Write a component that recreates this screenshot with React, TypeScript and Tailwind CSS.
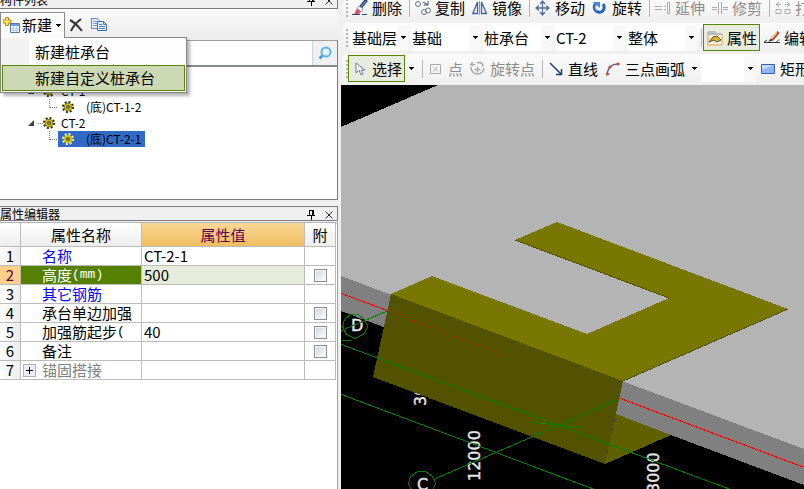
import { useState } from "react";
import type { ReactNode } from "react";
import clsx from "clsx";

const uiFont = "font-['Noto_Sans_CJK_SC','Noto_Sans_CJK_TC',sans-serif]";
const monoFont = "font-['Liberation_Mono','Noto_Sans_CJK_SC',monospace]";

const rows = [
  { name: "名称", value: "CT-2-1", tone: "text-[#0000f0]" },
  { name: "高度", unit: "(mm)", value: "500", check: true, selected: true },
  { name: "其它钢筋", value: "", tone: "text-[#0000f0]" },
  { name: "承台单边加强", value: "", check: true },
  { name: "加强筋起步", unit: "(", value: "40", check: true },
  { name: "备注", value: "", check: true },
  { name: "锚固搭接", value: "", tone: "text-[#808080]", expand: true },
];

function Caret({ className = "" }: { className?: string }) {
  return (
    <svg className={clsx("h-[3px] w-[5px] shrink-0", className)} viewBox="0 0 5 3" shapeRendering="crispEdges">
      <path d="M0 0h5v1H0zM1 1h3v1H1zM2 2h1v1H2z" fill="#000" />
    </svg>
  );
}

function PanelTitle({ title, className }: { title: string; className: string }) {
  return (
    <div className={clsx("flex shrink-0 items-center justify-between border-r border-b border-[#7c7c7c] bg-[#f0f0f0] pr-[2px] text-xs", className)}>
      <h2 className="leading-3">{title}</h2>
      <div className="flex gap-[6px]">
        <button type="button" aria-label="固定">
          <svg className="size-3" viewBox="0 0 12 12" shapeRendering="crispEdges">
            <path d="M4 7V2h3v5M7 2h1v5H7M2 7h8M6 8v4" fill="none" stroke="#000" />
          </svg>
        </button>
        <button type="button" aria-label="关闭">
          <svg className="size-3" viewBox="0 0 12 12">
            <path d="M2.5 3.5l7 7M9.5 3.5l-7 7" fill="none" stroke="#222" />
          </svg>
        </button>
      </div>
    </div>
  );
}

function GearIcon({ selected = false }: { selected?: boolean }) {
  return (
    <svg className="size-3 shrink-0" viewBox="0 0 12 12">
      <circle cx="6" cy="6" r="5" fill="none" stroke={selected ? "#fff6b0" : "#2a2600"} strokeWidth="2" strokeDasharray="1.960 1.960" />
      <circle cx="6" cy="6" r="3.800" fill="#f0e000" stroke={selected ? "#e8d800" : "#594f00"} strokeWidth=".7" />
      <path d="M6 2.500v7M2.500 6h7M3.500 3.500l5 5M8.500 3.500l-5 5" stroke="#7b7000" strokeWidth=".6" />
      <circle cx="6" cy="6" r="1.300" fill="#fff" stroke="#222" />
    </svg>
  );
}

function TreeRow({ label, child = false, selected = false }: { label: string; child?: boolean; selected?: boolean }) {
  return (
    <li className={clsx("flex h-4 items-center", child ? "pl-[49px]" : "pl-[28px]")}>
      {child ? (
        <svg className="h-4 w-[9px] shrink-0" viewBox="0 0 9 16" shapeRendering="crispEdges">
          <path d="M.5 0v9M.5 8.5H9" fill="none" stroke="#777" strokeDasharray="1 1" />
        </svg>
      ) : (
        <svg className="h-4 w-[15px] shrink-0" viewBox="0 0 15 16">
          <path d="M6 5v6H0z" fill="#404040" />
          <path d="M10 8.5h5" stroke="#777" strokeDasharray="1 1" />
        </svg>
      )}
      <button
        type="button"
        className={clsx("flex h-4 items-center", child ? "gap-3 pr-1 pl-1" : "gap-[6px]", selected && "bg-[#316ac5] text-black")}
      >
        <GearIcon selected={selected} />
        <span className="text-xs leading-4 whitespace-nowrap">{label}</span>
      </button>
    </li>
  );
}

function CreateMenu() {
  const [active, setActive] = useState(1);
  const items = ["新建桩承台", "新建自定义桩承台"];
  return (
    <div className="relative">
      <button type="button" className="relative z-20 flex h-[26px] w-[65px] items-center border border-b-0 border-[#8a8a8a] bg-[#fbfbfb] pl-[2px]">
        <svg className="h-4 w-[18px] shrink-0" viewBox="0 0 18 16">
          <path d="M2.500.5h3v2.500h2.500v3H5.500v2.500h-3V6H0V3h2.500z" fill="#ffe45a" stroke="#b28a16" />
          <path d="M7.500 6.500h9v9h-9z" fill="#f4f8ff" stroke="#5177ad" />
          <path d="M8 7h8v2H8z" fill="#6e9bdc" />
          <path d="M8 11.500h8M8 13.500h8M10.500 9v6M13.500 9v6" stroke="#a8c2e6" strokeWidth=".7" />
        </svg>
        <span className="ml-px">新建</span>
        <Caret className="ml-1" />
      </button>
      <ul role="menu" className="absolute top-[25px] left-0 z-10 w-[187px] border border-[#868686] bg-[linear-gradient(to_right,#f2f2f2_28px,#fdfdfd_28px)] p-px shadow-[3px_3px_3px_rgba(0,0,0,0.3)]">
        {items.map((item, i) => (
          <li key={item} role="none">
            <button
              type="button"
              role="menuitem"
              onMouseEnter={() => setActive(i)}
              className={clsx("flex h-[26px] w-full items-center border pl-8", active === i ? "border-[#5a8500] bg-[#ccd9b4]" : "border-transparent")}
            >
              {item}
            </button>
          </li>
        ))}
      </ul>
    </div>
  );
}

function ComponentPanel() {
  return (
    <section className="flex h-[200px] w-[338px] shrink-0 flex-col">
      <PanelTitle title="构件列表" className="h-[9px] overflow-hidden [&_h2]:-mt-2 [&_svg]:-mt-2" />
      <div className="flex h-[31px] shrink-0 items-center gap-1 bg-gradient-to-b from-[#fafafa] to-[#ececec]">
        <CreateMenu />
        <button type="button" aria-label="删除" className="mr-1">
          <svg className="h-4 w-[14px]" viewBox="0 0 14 16">
            <path d="M1 3c4 2 8 6 12 11M12 2C8 5 4 9 2 14" fill="none" stroke="#333" strokeWidth="2" />
          </svg>
        </button>
        <button type="button" aria-label="复制">
          <svg className="size-4" viewBox="0 0 16 16">
            <path d="M.5 1.500h6l2 2v8h-8z" fill="#e4eefb" stroke="#5e8bc9" />
            <path d="M2 4.500h4M2 6.500h4M2 8.500h4" stroke="#7ba2d8" />
            <path d="M6.500 4.500h6l3 3v6h-9z" fill="#e4eefb" stroke="#3e6fb5" />
            <path d="M12.500 4.500v3h3M8 7.500h3M8 9.500h6M8 11.500h6" fill="none" stroke="#4f7fc4" />
          </svg>
        </button>
      </div>
      <form className="flex h-[27px] shrink-0 border-t border-r border-b-2 border-t-[#a0a0a0] border-r-[#7c7c7c] border-b-[#868a90] bg-[#f0f0f0]" onSubmit={(e) => e.preventDefault()}>
        <input type="search" aria-label="搜索构件" className="min-w-0 flex-1 border-r border-[#c9d5e4] bg-white outline-none" />
        <button type="submit" aria-label="搜索" className="flex w-6 items-center justify-center">
          <svg className="size-[14px]" viewBox="0 0 14 14">
            <path d="M5 9L1.500 12.500" stroke="#3d9be0" strokeWidth="2.500" />
            <circle cx="8" cy="6" r="4.500" fill="#e5f5ff" stroke="#62b4ee" strokeWidth="2" />
          </svg>
        </button>
      </form>
      <div className="flex-1 border-r border-b border-[#7c7c7c] bg-white pt-4">
        <ul>
          <TreeRow label="CT-1" />
          <TreeRow label="(底)CT-1-2" child />
          <TreeRow label="CT-2" />
          <TreeRow label="(底)CT-2-1" child selected />
        </ul>
      </div>
    </section>
  );
}

function PropertyPanel() {
  const cell = "border-r border-b border-[#bcbcbc] p-0";
  const head = "bg-gradient-to-b from-white to-[#ededed]";
  return (
    <section className="mt-[6px] flex w-[338px] flex-1 flex-col">
      <PanelTitle title="属性编辑器" className="h-[15px] border-t" />
      <div className="mt-px flex-1 border-t border-r border-t-[#b0b4b8] border-r-[#a0a0a0] bg-white">
        <table className="w-[336px] table-fixed border-separate border-spacing-0 text-[15px] leading-[18px]">
          <colgroup>
            <col className="w-[21px]" />
            <col className="w-[121px]" />
            <col className="w-[163px]" />
            <col className="w-[31px]" />
          </colgroup>
          <thead>
            <tr className="h-6">
              <th className={clsx(cell, head)} />
              <th className={clsx(cell, head, "font-normal")}>属性名称</th>
              <th className={clsx(cell, "bg-gradient-to-b from-[#f9d795] to-[#efbd5f] font-normal text-[#5b0050]")}>属性值</th>
              <th className={clsx(cell, head, "font-normal")}>附</th>
            </tr>
          </thead>
          <tbody>
            {rows.map((row, i) => (
              <tr key={row.name} className="h-[19px]">
                <th className={clsx(cell, "font-normal", row.selected ? "bg-[#ffd08a] text-[#5b0050]" : "bg-gradient-to-r from-white to-[#ededed]")}>
                  {i + 1}
                </th>
                <td className={clsx(cell, "whitespace-nowrap", row.selected ? "bg-[#568000] text-white" : row.tone)}>
                  <div className="flex items-center">
                    <span className="flex w-[21px] shrink-0 pl-[2px]">
                      {row.expand && (
                        <button type="button" aria-label="展开" className="flex size-[13px] items-center justify-center border border-[#b0b0b0] bg-[#ececf2]">
                          <svg className="size-[7px]" viewBox="0 0 7 7" shapeRendering="crispEdges">
                            <path d="M0 3.500h7M3.500 0v7" stroke="#000" />
                          </svg>
                        </button>
                      )}
                    </span>
                    {row.name}
                    <span className={clsx(monoFont, "text-[13px]")}>{row.unit}</span>
                  </div>
                </td>
                <td className={clsx(cell, "pl-[2px]", row.selected && "bg-[#e5ecda]")}>{row.value}</td>
                <td className={cell}>
                  {row.check && (
                    <input
                      type="checkbox"
                      aria-label={`${row.name} 附加`}
                      className="mx-auto block size-[13px] appearance-none border border-[#8e8f8f] bg-gradient-to-br from-[#cfd3da] to-white shadow-[inset_0_0_0_1px_#f4f4f4]"
                    />
                  )}
                </td>
              </tr>
            ))}
          </tbody>
        </table>
      </div>
    </section>
  );
}

function Separator() {
  return <span className="mr-px ml-1 h-[18px] w-px shrink-0 bg-[#b4b4b4]" />;
}

function Grip() {
  return (
    <svg className="h-5 w-[2px] shrink-0" viewBox="0 0 2 20" shapeRendering="crispEdges">
      <path d="M1 1v19" stroke="#b4b4b4" strokeWidth="2" strokeDasharray="2 2" />
    </svg>
  );
}

function Tool({ icon, label, disabled = false, active = false }: { icon: ReactNode; label: string; disabled?: boolean; active?: boolean }) {
  return (
    <button
      type="button"
      disabled={disabled}
      className={clsx(
        "flex h-[27px] shrink-0 items-center gap-1 border pr-[2px] pl-[3px] whitespace-nowrap",
        active ? "border-[#5a8500] bg-[#e8ecdf]" : "border-transparent",
        disabled && "text-[#8c8c8c]",
      )}
    >
      <svg className="size-4" viewBox="0 0 16 16" fill="none">
        {icon}
      </svg>
      {label}
    </button>
  );
}

function Combo({ label, value, className }: { label: string; value: string; className: string }) {
  return (
    <label className={clsx("relative flex h-[26px] shrink-0 items-center bg-white", className)}>
      <select aria-label={label} className="h-full w-full appearance-none bg-transparent pl-px outline-none">
        <option>{value}</option>
      </select>
      <span className="pointer-events-none absolute inset-y-0 right-0 flex w-3 items-center justify-center bg-[#f8f8f8]">
        <Caret />
      </span>
    </label>
  );
}

const icons = {
  brush: (
    <>
      <path d="M14.500 0L8 8" stroke="#263d70" strokeWidth="3.500" />
      <path d="M14 1L8.500 7.500" stroke="#9cb8e8" />
      <path d="M7 6l4 3-2 3-4-3z" fill="#fff" stroke="#777" strokeWidth=".7" />
      <path d="M5 8.500l4 3-3 3H2z" fill="#e04868" />
      <path d="M0 14.500h8M10 14.500h5" stroke="#304a75" />
    </>
  ),
  copy: (
    <>
      <circle cx="3" cy="4" r="2.500" stroke="#65758a" />
      <circle cx="9" cy="12" r="2.500" stroke="#65758a" />
      <circle cx="13" cy="10.500" r="2.500" stroke="#65758a" />
      <path d="M8 2l5 3M13 1v4H9" stroke="#314e7b" />
    </>
  ),
  mirror: (
    <>
      <path d="M5.500 2v11.500H.8zM9.500 2v11.500h5z" stroke="#3c65a3" strokeWidth="1.300" />
      <path d="M7.500 1v14" stroke="#7996c2" />
    </>
  ),
  move: <path d="M7.500 1.500v13M1 8h13M5 4l2.500-3L10 4M5 12l2.500 3L10 12M4 5.500L1 8l3 2.500M11 5.500L14 8l-3 2.500" stroke="#536f98" strokeWidth="1.300" />,
  rotate: (
    <>
      <path d="M4 3.500A5 5 0 1 0 11 4" stroke="#2563c0" strokeWidth="3" />
      <path d="M1 2h7v6z" fill="#4b87df" />
      <path d="M4 5a4 4 0 0 0 1 6" stroke="#9fc4f7" />
    </>
  ),
  extend: <path d="M0 6.500h7M0 9.500h7M9 6.500h2M9 9.500h2M12.500 2.500v11h2v-11z" stroke="#aaa" />,
  trim: <path d="M0 7.500h5M11 7.500h5M0 9.500h5M11 9.500h5M6.500 2v12M9.500 2v12" stroke="#aaa" />,
  split: <path d="M1 4.500h5M4 2L1 4.500 4 7M10 4.500h5M12 2l3 2.500L12 7M1 9.500h5v4H1zM10 9.500h5v4h-5z" stroke="#aaa" />,
  property: (
    <>
      <path d="M1 2h6l2 2h6v11H1z" fill="#fff5df" stroke="#e79a3c" />
      <path d="M1 1h7l2 2h5v2H1z" fill="#bdbdbd" />
      <path d="M2 12l4-5 4-1 4 4-4 2-3-2z" fill="#e0b832" stroke="#4f4b32" />
    </>
  ),
  edit: (
    <>
      <path d="M14.500 2L8 9.500" stroke="#a53b2d" strokeWidth="3" />
      <path d="M13 2.500L7 9.500" stroke="#f2cf7d" strokeWidth="1.500" />
      <path d="M7 8.500l-3 3.500 5-1.500" fill="#333" />
      <path d="M0 12.500h16M0 12l3-2M12 12.500l3-3" stroke="#333" />
    </>
  ),
  pointer: <path d="M4 2v10l3-3 2 5 2-1-2-4h4z" fill="#fff" stroke="#6a7b9a" />,
  point: <path d="M2.500 3.500h10v9h-10zM5 5.500l5 5M10 5.500l-5 5" stroke="#aaa" />,
  rotatePoint: <path d="M1 6a6.500 6.500 0 1 0 13 1M2 5V1M0 3.500h5M7 1.500h3a4 4 0 0 1 3 4M4.500 8.500h6M7.500 5.500v6" stroke="#aaa" strokeWidth="1.500" />,
  line: <path d="M2 2l11 11M13.500 8v5.500H8" stroke="#203e70" strokeWidth="1.500" />,
  arc: (
    <>
      <path d="M2 13C3 6 7 3 13 3" stroke="#466795" strokeWidth="1.500" />
      <circle cx="2.500" cy="13" r="1.600" fill="#d34731" />
      <circle cx="5" cy="6" r="1.600" fill="#d34731" />
      <circle cx="13" cy="3" r="1.600" fill="#d34731" />
    </>
  ),
  rect: (
    <>
      <path d="M1.500 3.500h13v9h-13z" fill="#8fb7ff" stroke="#365baf" />
      <path d="M2 4h12L2 9z" fill="#c3d9ff" />
    </>
  ),
};

function Toolbars() {
  const bar = "flex w-full items-center overflow-hidden rounded-l-sm bg-gradient-to-b from-[#fbfbfb] to-[#efefef] pl-[3px]";
  return (
    <header className="flex h-[85px] shrink-0 flex-col justify-between overflow-hidden bg-[#f0f0f0] pl-[2px]">
      <div className={clsx(bar, "h-[21px] pb-[5px]")}>
        <Grip />
        <Tool icon={icons.brush} label="删除" />
        <Separator />
        <Tool icon={icons.copy} label="复制" />
        <Tool icon={icons.mirror} label="镜像" />
        <Separator />
        <Tool icon={icons.move} label="移动" />
        <Tool icon={icons.rotate} label="旋转" />
        <Separator />
        <Tool icon={icons.extend} label="延伸" disabled />
        <Tool icon={icons.trim} label="修剪" disabled />
        <Separator />
        <Tool icon={icons.split} label="打断" disabled />
      </div>
      <div className={clsx(bar, "h-[29px]")}>
        <Grip />
        <div className="flex shrink-0 gap-[2px] pl-[3px]">
          <Combo label="楼层" value="基础层" className="w-[58px]" />
          <Combo label="类别" value="基础" className="w-[70px]" />
          <Combo label="构件类型" value="桩承台" className="w-[70px]" />
          <Combo label="构件" value="CT-2" className="w-[70px]" />
          <Combo label="单元" value="整体" className="w-[70px]" />
        </div>
        <Separator />
        <Tool icon={icons.property} label="属性" active />
        <Tool icon={icons.edit} label="编辑钢筋" />
      </div>
      <div className={clsx(bar, "h-[31px] pb-[2px]")}>
        <Grip />
        <Tool icon={icons.pointer} label="选择" active />
        <button type="button" aria-label="选择方式" className="px-1">
          <Caret />
        </button>
        <Separator />
        <Tool icon={icons.point} label="点" disabled />
        <Tool icon={icons.rotatePoint} label="旋转点" disabled />
        <Separator />
        <Tool icon={icons.line} label="直线" />
        <Tool icon={icons.arc} label="三点画弧" />
        <button type="button" aria-label="画弧方式" className="px-1">
          <Caret />
        </button>
        <Combo label="画弧参数" value="" className="w-[55px]" />
        <Tool icon={icons.rect} label="矩形" />
      </div>
    </header>
  );
}

function ModelView() {
  return (
    <main className="min-h-0 flex-1 bg-black">
      <svg
        role="img"
        aria-label="三维模型"
        className="block size-full"
        viewBox="341 85 463 404"
        preserveAspectRatio="xMinYMin slice"
        shapeRendering="crispEdges"
        fontFamily="DejaVu Sans"
        fontSize="16"
      >
        <path d="M341 85H804V449L341 276z" fill="#b4b4b4" />
        <path d="M341 85h97L341 127z" fill="#000" />
        <path d="M341 276L804 449V485L341 311z" fill="#808080" />
        <path d="M616 414L671 435 605 464z" fill="#606000" />
        <g fill="#e6e6e6" stroke="#e6e6e6" strokeWidth=".4">
          <text transform="translate(426 406) rotate(-90)">3000</text>
          <text transform="translate(480 481) rotate(-90)">12000</text>
          <text transform="translate(659 493) rotate(-90)">3000</text>
          <text x="351" y="331">D</text>
          <text x="417" y="490">C</text>
        </g>
        <path d="M391 294L623 381 605 464 373 377z" fill="#525200" />
        <path d="M391 294L432 276 587 334 669 298 515 240 557 222 788 309 623 381z" fill="#787800" />
        <path d="M515 240L669 298M788 309L623 381" stroke="#525200" />
        <g fill="none" stroke="#008000" transform="translate(.5 .5)">
          <path d="M341 330L388 310M341 340h9M341 344L730 489M341 394L594 489M433 479L620 398M532 422L581 427" />
          <path d="M350 314l8 0 6 5 3 7-3 7-9 5-9-4-4-8 2-7z" />
          <path d="M417 471l8 0 7 5 3 7-3 7h-21l-3-7 2-7z" />
        </g>
        <g stroke="#f00" transform="translate(.5 .5)">
          <path d="M341 293L387 310M620 398L804 467" />
          <path d="M389 311L505 355" strokeDasharray="1.500 7.100" />
        </g>
      </svg>
    </main>
  );
}

export default function App() {
  return (
    <div className={clsx("flex h-screen w-full overflow-hidden bg-[#f0f0f0] text-[15px] leading-5 text-black", uiFont)}>
      <aside className="flex w-[341px] shrink-0 flex-col">
        <ComponentPanel />
        <PropertyPanel />
      </aside>
      <div className="flex min-w-0 flex-1 flex-col">
        <Toolbars />
        <ModelView />
      </div>
    </div>
  );
}
